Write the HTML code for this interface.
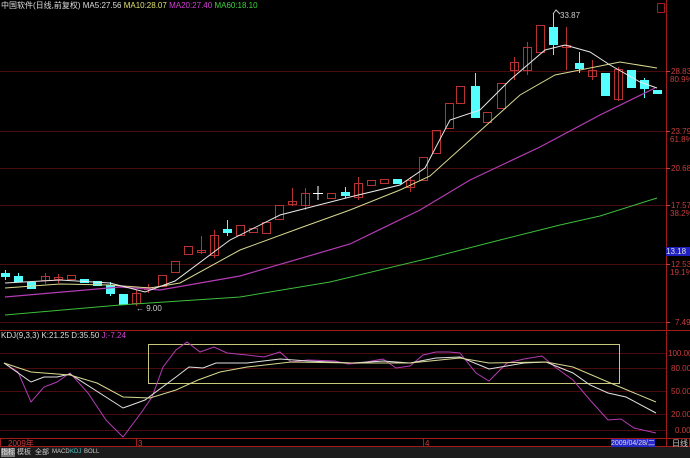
<!DOCTYPE html>
<html><head><meta charset="utf-8"><style>
body{margin:0;background:#000;width:690px;height:458px;overflow:hidden;position:relative;font-family:"Liberation Sans","Noto Sans CJK SC",sans-serif}
.t{position:absolute;font-size:8px;white-space:nowrap;line-height:9px}
.r{color:#c83c3c}
.tb{position:absolute;top:448px;font-size:7px;line-height:9px;white-space:nowrap;color:#ccc}
</style></head><body>
<svg width="690" height="458" style="position:absolute;left:0;top:0">
<g stroke="#4a0c0c" stroke-width="1">
<line x1="0" y1="71.5" x2="666" y2="71.5"/><line x1="0" y1="131.5" x2="666" y2="131.5"/>
<line x1="0" y1="168.5" x2="666" y2="168.5"/><line x1="0" y1="205.5" x2="666" y2="205.5"/>
<line x1="0" y1="264.5" x2="666" y2="264.5"/><line x1="0" y1="322.5" x2="666" y2="322.5"/>
<line x1="0" y1="353.5" x2="666" y2="353.5"/><line x1="0" y1="368.5" x2="666" y2="368.5"/>
<line x1="0" y1="391.5" x2="666" y2="391.5"/><line x1="0" y1="414.5" x2="666" y2="414.5"/>
<line x1="0" y1="430.5" x2="666" y2="430.5"/>
</g>
<g stroke="#a01c1c" stroke-width="1" fill="none">
<line x1="0" y1="330.5" x2="690" y2="330.5"/>
<line x1="666.5" y1="0" x2="666.5" y2="447"/>
<rect x="0.5" y="438.5" width="689" height="8"/>
<line x1="136.5" y1="439" x2="136.5" y2="447"/><line x1="423.5" y1="439" x2="423.5" y2="447"/>
<rect x="657.5" y="3.5" width="7" height="9"/>
</g>
<g stroke="#c83c3c" stroke-width="1">
<line x1="666" y1="71.5" x2="670" y2="71.5"/><line x1="666" y1="131.5" x2="670" y2="131.5"/>
<line x1="666" y1="168.5" x2="670" y2="168.5"/><line x1="666" y1="205.5" x2="670" y2="205.5"/>
<line x1="666" y1="264.5" x2="670" y2="264.5"/><line x1="666" y1="322.5" x2="670" y2="322.5"/>
</g>
<!-- candles -->
<g stroke="#b83232" fill="none" stroke-width="1">
<rect x="41.5" y="276.5" width="8" height="4"/><rect x="54.5" y="277.5" width="8" height="2"/><rect x="67.5" y="275.5" width="8" height="4"/>
<rect x="132.5" y="293.5" width="8" height="10"/><rect x="144.5" y="287.5" width="8" height="2"/><rect x="158.5" y="275.5" width="8" height="11"/>
<rect x="171.5" y="261.5" width="8" height="11"/><rect x="184.5" y="246.5" width="8" height="8"/><rect x="197.5" y="250.5" width="8" height="2"/>
<rect x="210.5" y="235.5" width="8" height="20"/><rect x="236.5" y="225.5" width="8" height="10"/><rect x="249.5" y="228.5" width="8" height="4"/>
<rect x="262.5" y="222.5" width="8" height="11"/><rect x="275.5" y="205.5" width="8" height="14"/><rect x="288.5" y="201.5" width="8" height="3"/>
<rect x="301.5" y="193.5" width="8" height="12"/><rect x="327.5" y="193.5" width="8" height="5"/><rect x="354.5" y="183.5" width="8" height="14"/>
<rect x="367.5" y="180.5" width="8" height="5"/><rect x="380.5" y="179.5" width="8" height="4"/><rect x="406.5" y="180.5" width="8" height="7"/>
<rect x="419.5" y="157.5" width="8" height="23"/><rect x="432.5" y="130.5" width="8" height="23"/><rect x="445.5" y="103.5" width="8" height="25"/>
<rect x="456.5" y="86.5" width="8" height="17"/><rect x="483.5" y="112.5" width="8" height="10"/><rect x="497.5" y="83.5" width="8" height="25"/>
<rect x="510.5" y="62.5" width="8" height="8"/><rect x="523.5" y="47.5" width="8" height="23"/><rect x="536.5" y="25.5" width="8" height="27"/>
<rect x="562.5" y="45.5" width="8" height="2"/><rect x="588.5" y="70.5" width="8" height="6"/><rect x="614.5" y="69.5" width="8" height="30"/>
<line x1="45.5" y1="273" x2="45.5" y2="284"/><line x1="58.5" y1="274" x2="58.5" y2="283"/><line x1="136.5" y1="290" x2="136.5" y2="306"/>
<line x1="148.5" y1="284" x2="148.5" y2="293"/><line x1="201.5" y1="236" x2="201.5" y2="254"/><line x1="214.5" y1="230" x2="214.5" y2="258"/>
<line x1="292.5" y1="188" x2="292.5" y2="206"/><line x1="305.5" y1="188" x2="305.5" y2="210"/><line x1="358.5" y1="177" x2="358.5" y2="200"/>
<line x1="410.5" y1="177" x2="410.5" y2="192"/><line x1="514.5" y1="57" x2="514.5" y2="80"/><line x1="527.5" y1="42" x2="527.5" y2="75"/>
<line x1="566.5" y1="27" x2="566.5" y2="70"/><line x1="592.5" y1="60" x2="592.5" y2="80"/><line x1="618.5" y1="67" x2="618.5" y2="101"/>
</g>
<g stroke="#5ff" fill="#5ff" stroke-width="1">
<rect x="1.5" y="273.5" width="8" height="3"/><rect x="14.5" y="276.5" width="8" height="5"/><rect x="27.5" y="282.5" width="8" height="6"/>
<rect x="80.5" y="279.5" width="8" height="3"/><rect x="93.5" y="281.5" width="8" height="4"/><rect x="106.5" y="285.5" width="8" height="8"/>
<rect x="119.5" y="294.5" width="8" height="10"/><rect x="223.5" y="229.5" width="8" height="3"/><rect x="341.5" y="192.5" width="8" height="3"/>
<rect x="393.5" y="179.5" width="8" height="4"/><rect x="471.5" y="86.5" width="8" height="31"/><rect x="549.5" y="27.5" width="8" height="17"/>
<rect x="575.5" y="63.5" width="8" height="5"/><rect x="601.5" y="73.5" width="8" height="22"/><rect x="627.5" y="70.5" width="8" height="17"/>
<rect x="640.5" y="80.5" width="8" height="8"/><rect x="653.5" y="90.5" width="8" height="3"/>
<line x1="5.5" y1="270" x2="5.5" y2="280"/><line x1="18.5" y1="273" x2="18.5" y2="282"/><line x1="110.5" y1="282" x2="110.5" y2="296"/>
<line x1="227.5" y1="220" x2="227.5" y2="236"/><line x1="345.5" y1="187" x2="345.5" y2="198"/><line x1="475.5" y1="73" x2="475.5" y2="117"/>
<line x1="553.5" y1="13" x2="553.5" y2="55"/><line x1="579.5" y1="52" x2="579.5" y2="73"/><line x1="644.5" y1="78" x2="644.5" y2="98"/>
</g>
<g stroke="#fff"><line x1="318" y1="186" x2="318" y2="200"/><line x1="313" y1="193.5" x2="323" y2="193.5"/></g>
<!-- MA lines -->
<polyline fill="none" stroke="#3cbe3c" stroke-width="1" points="5,315 120,305 240,297 330,282 430,258 500,240 560,225 600,216 657,198"/>
<polyline fill="none" stroke="#b43cb4" stroke-width="1.2" points="5,297 120,287 160,290 240,276 350,244 420,210 470,180 540,147 600,115 655,88"/>
<polyline fill="none" stroke="#d8d890" stroke-width="1" points="5,288 60,284 110,285 150,288 180,283 240,250 300,228 350,210 400,190 430,176 470,140 520,95 555,75 580,70 620,62 657,68"/>
<polyline fill="none" stroke="#e8e8e8" stroke-width="1" points="5,283 60,280 110,283 145,292 175,281 230,240 280,215 350,197 400,185 425,168 450,120 480,110 510,80 545,50 565,45 590,52 610,65 640,82 657,88"/>
<polyline fill="none" stroke="#ccc" points="553,14 556,10 560,14"/>
<!-- KDJ -->
<rect x="148.5" y="344.5" width="471" height="39" fill="none" stroke="#c8c87a" stroke-width="1"/>
<polyline fill="none" stroke="#b43cb4" stroke-width="1" points="4,363 18,372 31,402 44,387 57,382 70,373 88,393 106,420 123,437 141,413 152,397 163,367 176,350 187,342 200,352 214,347 227,353 247,355 264,357 280,352 291,362 308,360 335,361 348,364 361,363 383,359 396,368 410,366 423,355 436,352 449,352 460,353 476,373 489,381 507,363 524,359 542,356 555,367 573,380 590,400 608,420 621,419 634,428 656,433"/>
<polyline fill="none" stroke="#e0e0e0" stroke-width="1" points="4,363 31,382 44,377 57,377 70,374 123,408 145,400 176,377 189,367 203,368 216,363 247,363 280,359 308,361 352,363 383,361 410,363 436,358 460,357 489,369 524,363 546,362 573,373 590,385 608,393 626,397 656,413"/>
<polyline fill="none" stroke="#d8d890" stroke-width="1" points="4,363 31,372 70,375 97,383 123,397 150,398 176,390 198,380 220,372 247,367 291,362 352,363 410,363 460,358 489,363 546,362 573,367 608,382 656,402"/>
</svg>
<div class="t" style="left:1px;top:1px;color:#ddd">中国软件(日线,前复权) MA5:27.56 <span style="color:#e0e070">MA10:28.07</span> <span style="color:#d040d0">MA20:27.40</span> <span style="color:#40d040">MA60:18.10</span></div>
<div class="t" style="left:560px;top:11px;color:#ccc">33.87</div>
<div class="t" style="left:136px;top:304px;color:#ccc">← 9.00</div>
<div class="t" style="left:1px;top:331px;color:#ddd">KDJ(9,3,3) K:21.25 D:35.50 <span style="color:#d040d0">J:-7.24</span></div>
<div class="t r" style="left:671px;top:67px">28.83</div><div class="t r" style="left:670px;top:75px">80.9%</div>
<div class="t r" style="left:671px;top:127px">23.79</div><div class="t r" style="left:670px;top:135px">61.8%</div>
<div class="t r" style="left:671px;top:164px">20.68</div>
<div class="t r" style="left:671px;top:201px">17.57</div><div class="t r" style="left:670px;top:209px">38.2%</div>
<div class="t" style="left:666px;top:247px;width:24px;height:9px;background:#2020c0;color:#ddd">13.18</div>
<div class="t r" style="left:671px;top:260px">12.53</div><div class="t r" style="left:670px;top:268px">19.1%</div>
<div class="t r" style="left:675px;top:318px">7.49</div>
<div class="t r" style="left:668px;top:349px">100.00</div><div class="t r" style="left:671px;top:364px">80.00</div>
<div class="t r" style="left:671px;top:387px">50.00</div><div class="t r" style="left:671px;top:410px">20.00</div>
<div class="t r" style="left:675px;top:426px">0.00</div>
<div class="t r" style="left:8px;top:439px">2009年</div>
<div class="t r" style="left:138px;top:439px">3</div>
<div class="t r" style="left:425px;top:439px">4</div>
<div class="t" style="left:611px;top:439px;width:44px;height:8px;background:#2828c8;color:#ddd;font-size:7px">2009/04/28/二</div>
<div class="t" style="left:672px;top:439px;color:#ccc">日线</div>
<div style="position:absolute;left:0;top:447px;width:690px;height:11px;background:#1c1c1c"></div>
<div class="tb" style="left:1px;background:#777;color:#ddd">指标</div>
<div class="tb" style="left:17px">模板</div>
<div class="tb" style="left:35px">全部</div>
<div class="tb" style="left:52px;font-size:6px">MACD</div>
<div class="tb" style="left:70px;font-size:6px;color:#4cc">KDJ</div>
<div class="tb" style="left:84px;font-size:6px">BOLL</div>
</body></html>
